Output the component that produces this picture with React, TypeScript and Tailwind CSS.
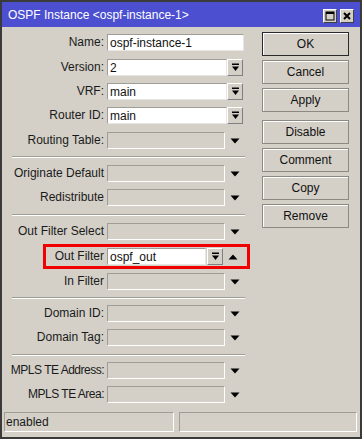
import React from "react";

const FONT = { fontFamily: '"Liberation Sans", Arial, sans-serif' };

function DropBtn() {
  return (
    <div className="w-[16px] h-[17px] bg-[#d4d0c8] border border-t-[#ffffff] border-l-[#ffffff] border-r-[#808080] border-b-[#808080] flex items-center justify-center shrink-0">
      <svg width="9" height="9" viewBox="0 0 9 9">
        <rect x="1" y="0.5" width="7" height="1.5" fill="#000" />
        <path d="M1 3.5 H8 L4.5 8 Z" fill="#000" />
      </svg>
    </div>
  );
}

function ArrowDown() {
  return (
    <div className="w-[20px] h-[17px] flex items-center justify-center shrink-0">
      <svg width="10" height="6" viewBox="0 0 10 6">
        <path d="M0.5 0.5 H9.5 L5 5.5 Z" fill="#000" />
      </svg>
    </div>
  );
}

function ArrowUp() {
  return (
    <div className="w-[20px] h-[17px] flex items-center justify-center shrink-0">
      <svg width="10" height="6" viewBox="0 0 10 6">
        <path d="M0.5 5.5 H9.5 L5 0.5 Z" fill="#000" />
      </svg>
    </div>
  );
}

function TextIn({ value, w }: { value: string; w: string }) {
  return (
    <div
      className={`${w} h-[17px] bg-white border border-t-[#a09d96] border-l-[#a09d96] border-r-[#e8e6e2] border-b-[#e8e6e2] flex items-center pl-[2px] text-[12px] text-[#111] shrink-0`}
    >
      {value}
    </div>
  );
}

function DisIn() {
  return (
    <div className="w-[118px] h-[17px] bg-[#d4d0c8] border border-t-[#a09d96] border-l-[#a09d96] border-r-[#ffffff] border-b-[#ffffff] shrink-0" />
  );
}

function Label({ text, tight }: { text: string; tight?: boolean }) {
  return (
    <div
      className={`w-[102px] text-right text-[12px] text-[#1a1a1a] whitespace-nowrap leading-[17px] ${
        tight ? "tracking-[-0.5px]" : ""
      }`}
    >
      {text}
    </div>
  );
}

function Row({
  label,
  children,
  mt,
  tight,
}: {
  label: string;
  children: React.ReactNode;
  mt: string;
  tight?: boolean;
}) {
  return (
    <div className={`flex items-center h-[17px] ${mt}`}>
      <Label text={label} tight={tight} />
      <div className="ml-[3px] flex items-center">{children}</div>
    </div>
  );
}

function Sep({ mt }: { mt: string }) {
  return (
    <div className={`ml-[10px] w-[233px] ${mt}`}>
      <div className="h-px bg-[#a09d96]" />
      <div className="h-px bg-white" />
    </div>
  );
}

function Btn({ text, def, mt }: { text: string; def?: boolean; mt: string }) {
  return (
    <div
      className={`${mt} w-[87px] h-[24px] flex items-center justify-center text-[12px] text-[#111] bg-[#d4d0c8] border ${
        def ? "border-[#2a2a2a]" : "border-[#8c8983]"
      } shadow-[inset_1px_1px_0_#ffffff]`}
    >
      {text}
    </div>
  );
}

export default function App() {
  return (
    <div
      style={FONT}
      className="w-[362px] h-[439px] bg-[#d4d0c8] border-2 border-[#3a3a3a] flex flex-col overflow-hidden"
    >
      {/* title bar */}
      <div className="h-[25px] bg-[#4b4fd0] flex items-center pl-[6px] pr-[6px] shrink-0">
        <div className="text-white text-[12px] flex-1 pt-[1px]">OSPF Instance &lt;ospf-instance-1&gt;</div>
        <div className="flex gap-[3px] mt-[2px]">
          <div className="w-[14px] h-[14px] bg-[#d4d0c8] border border-t-[#ffffff] border-l-[#ffffff] border-r-[#404040] border-b-[#404040] flex items-center justify-center">
            <svg width="10" height="10" viewBox="0 0 10 10">
              <rect x="1" y="1" width="8" height="8" fill="none" stroke="#000" strokeWidth="1" />
              <rect x="1" y="1" width="8" height="2" fill="#000" />
            </svg>
          </div>
          <div className="w-[14px] h-[14px] bg-[#d4d0c8] border border-t-[#ffffff] border-l-[#ffffff] border-r-[#404040] border-b-[#404040] flex items-center justify-center">
            <svg width="10" height="10" viewBox="0 0 10 10">
              <path d="M2 2 L8 8 M8 2 L2 8" stroke="#000" strokeWidth="2" />
            </svg>
          </div>
        </div>
      </div>

      {/* body */}
      <div className="flex flex-1">
        <div className="w-[258px] flex flex-col pt-[7px]">
          <Row label="Name:" mt="mt-0">
            <TextIn value="ospf-instance-1" w="w-[137px]" />
          </Row>
          <Row label="Version:" mt="mt-[8px]">
            <TextIn value="2" w="w-[120px]" />
            <DropBtn />
          </Row>
          <Row label="VRF:" mt="mt-[7px]">
            <TextIn value="main" w="w-[120px]" />
            <DropBtn />
          </Row>
          <Row label="Router ID:" mt="mt-[7px]">
            <TextIn value="main" w="w-[120px]" />
            <DropBtn />
          </Row>
          <Row label="Routing Table:" mt="mt-[8px]">
            <DisIn />
            <ArrowDown />
          </Row>
          <Sep mt="mt-[7px]" />
          <Row label="Originate Default" mt="mt-[7px]">
            <DisIn />
            <ArrowDown />
          </Row>
          <Row label="Redistribute" mt="mt-[7px]">
            <DisIn />
            <ArrowDown />
          </Row>
          <Sep mt="mt-[8px]" />
          <Row label="Out Filter Select" mt="mt-[7px]">
            <DisIn />
            <ArrowDown />
          </Row>
          <div className="relative mt-[8px]">
            <Row label="Out Filter" mt="mt-0">
              <TextIn value="ospf_out" w="w-[99px]" />
              <div className="ml-[1px]">
                <DropBtn />
              </div>
              <ArrowUp />
            </Row>
            <div className="absolute left-[41px] top-[-4px] w-[207px] h-[25px] border-[3px] border-[#f00000]" />
          </div>
          <Row label="In Filter" mt="mt-[8px]">
            <DisIn />
            <ArrowDown />
          </Row>
          <Sep mt="mt-[7px]" />
          <Row label="Domain ID:" mt="mt-[6px]">
            <DisIn />
            <ArrowDown />
          </Row>
          <Row label="Domain Tag:" mt="mt-[7px]">
            <DisIn />
            <ArrowDown />
          </Row>
          <Sep mt="mt-[8px]" />
          <Row label="MPLS TE Address:" mt="mt-[6px]" tight>
            <DisIn />
            <ArrowDown />
          </Row>
          <Row label="MPLS TE Area:" mt="mt-[7px]" tight>
            <DisIn />
            <ArrowDown />
          </Row>
        </div>
        <div className="ml-[2px] flex flex-col pt-[5px]">
          <Btn text="OK" def mt="mt-0" />
          <Btn text="Cancel" mt="mt-[4px]" />
          <Btn text="Apply" mt="mt-[4px]" />
          <Btn text="Disable" mt="mt-[8px]" />
          <Btn text="Comment" mt="mt-[4px]" />
          <Btn text="Copy" mt="mt-[4px]" />
          <Btn text="Remove" mt="mt-[4px]" />
        </div>
      </div>

      {/* status bar */}
      <div className="flex gap-[5px] px-[2px] pb-[5px] shrink-0">
        <div className="w-[170px] h-[20px] border border-t-[#a09d96] border-l-[#a09d96] border-r-[#ffffff] border-b-[#ffffff] flex items-center pl-[1px] text-[12px] text-[#1a1a1a]">
          enabled
        </div>
        <div className="w-[178px] h-[20px] border border-t-[#a09d96] border-l-[#a09d96] border-r-[#ffffff] border-b-[#ffffff]" />
      </div>
    </div>
  );
}
